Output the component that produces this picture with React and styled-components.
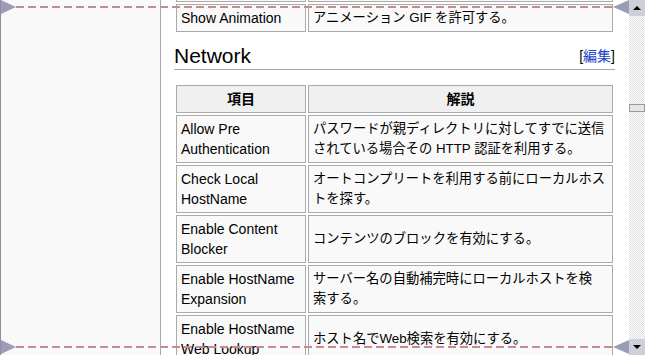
import styled, { createGlobalStyle } from "styled-components";

const COLORS = {
  border: "#aaaaaa",
  cell: "#f9f9f9",
  head: "#f0f0f0",
  side: "#f9f9f9",
  marker: "#9c9cb8",
  dash: "#c48c8c",
  link: "#1a3fc8",
  button: "#cfcfd9",
};

const GlobalStyle = createGlobalStyle`
  html, body { margin: 0; padding: 0; }
  body {
    width: 645px;
    height: 355px;
    overflow: hidden;
    background: #fff;
    color: #000;
    font-family: "Liberation Sans", "Noto Sans CJK JP", sans-serif;
  }
`;

// the row above "Show Animation" is scrolled out of view, only its bottom border shows
const previousRows = [
  { item: ["\u00a0"], desc: ["\u00a0"] },
  { item: ["Show Animation"], desc: ["アニメーション GIF を許可する。"] },
];

const networkRows = [
  {
    item: ["Allow Pre", "Authentication"],
    desc: ["パスワードが親ディレクトリに対してすでに送信", "されている場合その HTTP 認証を利用する。"],
  },
  {
    item: ["Check Local", "HostName"],
    desc: ["オートコンプリートを利用する前にローカルホス", "トを探す。"],
  },
  {
    item: ["Enable Content", "Blocker"],
    desc: ["コンテンツのブロックを有効にする。"],
  },
  {
    item: ["Enable HostName", "Expansion"],
    desc: ["サーバー名の自動補完時にローカルホストを検", "索する。"],
  },
  {
    item: ["Enable HostName", "Web Lookup"],
    desc: ["ホスト名でWeb検索を有効にする。"],
  },
];

const Lines = ({ lines }) =>
  lines.map((line, i) => (
    <span key={i}>
      {i > 0 && <br />}
      {line}
    </span>
  ));

const SettingsTable = ({ rows, header, scrolled }) => (
  <Table $scrolled={scrolled}>
    {header && (
      <thead>
        <tr>
          <HeadCell $first>項目</HeadCell>
          <HeadCell>解説</HeadCell>
        </tr>
      </thead>
    )}
    <tbody>
      {rows.map((row, i) => (
        <tr key={i}>
          <Cell $first>
            <Lines lines={row.item} />
          </Cell>
          <Cell $desc>
            <Lines lines={row.desc} />
          </Cell>
        </tr>
      ))}
    </tbody>
  </Table>
);

const Guide = ({ top }) => (
  <GuideRow $top={top}>
    <Marker $dir="right" />
    <Dash />
    <Marker $dir="left" />
  </GuideRow>
);

const App = () => {
  return (
    <>
      <GlobalStyle />
      <Page>
        <Sidebar />
        <Content>
          <SettingsTable rows={previousRows} scrolled />
          <SectionHeading>
            <span>Network</span>
            <EditLink>
              [<a href="#edit">編集</a>]
            </EditLink>
          </SectionHeading>
          <SettingsTable rows={networkRows} header />
        </Content>
        <Scrollbar>
          <ScrollButton $dir="up" />
          <Track>
            <Thumb />
          </Track>
          <ScrollButton $dir="down" />
        </Scrollbar>
        <Guide top={0} />
        <Guide top={340} />
      </Page>
    </>
  );
};

const Page = styled.div`
  position: relative;
  display: flex;
  width: 645px;
  height: 355px;
  overflow: hidden;
`;

const Sidebar = styled.div`
  flex: 0 0 161px;
  box-sizing: border-box;
  background: ${COLORS.side};
  border-left: 1px solid #8e8ea4;
  border-right: 1px solid #a8a8a8;
`;

const Content = styled.div`
  flex: 1;
  min-width: 0;
  background: #fff;
  padding: 0 14px 0 13px;
  overflow: hidden;
`;

const Table = styled.table`
  width: 100%;
  table-layout: fixed;
  border-collapse: separate;
  border-spacing: 2px;
  margin-top: ${(p) => (p.$scrolled ? "-28px" : "0")};
`;

const Cell = styled.td`
  box-sizing: border-box;
  width: ${(p) => (p.$first ? "130px" : "auto")};
  border: 1px solid ${COLORS.border};
  background: ${COLORS.cell};
  padding: 3px 4px;
  line-height: 20px;
  font-size: ${(p) => (p.$desc ? "13.3px" : "14px")};
  white-space: nowrap;
  vertical-align: middle;
  text-align: left;
`;

const HeadCell = styled.th`
  box-sizing: border-box;
  width: ${(p) => (p.$first ? "130px" : "auto")};
  border: 1px solid ${COLORS.border};
  background: ${COLORS.head};
  padding: 3px 4px;
  line-height: 20px;
  font-size: 14px;
  font-weight: bold;
  text-align: center;
`;

const SectionHeading = styled.h2`
  display: flex;
  justify-content: space-between;
  align-items: center;
  margin: 9px 0 13px;
  padding: 0;
  line-height: 26px;
  font-size: 21px;
  font-weight: normal;
  border-bottom: 1px solid ${COLORS.border};
`;

const EditLink = styled.span`
  font-size: 14px;
  line-height: 20px;

  a {
    color: ${COLORS.link};
    text-decoration: none;
  }
`;

const Scrollbar = styled.div`
  flex: 0 0 16px;
  display: flex;
  flex-direction: column;
`;

const ScrollButton = styled.div`
  height: 16px;
  flex-shrink: 0;
  background: ${COLORS.button};
  display: flex;
  align-items: center;
  justify-content: center;

  &::before {
    content: "";
    width: 0;
    height: 0;
    border-left: 4px solid transparent;
    border-right: 4px solid transparent;
    ${(p) =>
      p.$dir === "up"
        ? "border-bottom: 4px solid #000;"
        : "border-top: 4px solid #000;"}
  }
`;

const Track = styled.div`
  flex: 1;
  background-color: #fff;
  background-image: conic-gradient(
    #dedede 25%,
    transparent 0 50%,
    #dedede 0 75%,
    transparent 0
  );
  background-size: 2px 2px;
`;

const Thumb = styled.div`
  margin-top: 88px;
  height: 8px;
  box-sizing: border-box;
  border: 1px solid #9a9a9a;
  background: #e6e6e6;
`;

const GuideRow = styled.div`
  position: absolute;
  left: 1px;
  right: 16px;
  top: ${(p) => p.$top}px;
  height: 14px;
  display: flex;
  align-items: center;
  pointer-events: none;
`;

const Marker = styled.div`
  width: 0;
  height: 0;
  border-top: 7px solid transparent;
  border-bottom: 7px solid transparent;
  ${(p) =>
    p.$dir === "right"
      ? `border-left: 15px solid ${COLORS.marker};`
      : `border-right: 16px solid ${COLORS.marker};`}
`;

const Dash = styled.div`
  flex: 1;
  height: 2px;
  background: repeating-linear-gradient(
    to right,
    ${COLORS.dash} 0 8px,
    transparent 8px 12px
  );
`;

export default App;
